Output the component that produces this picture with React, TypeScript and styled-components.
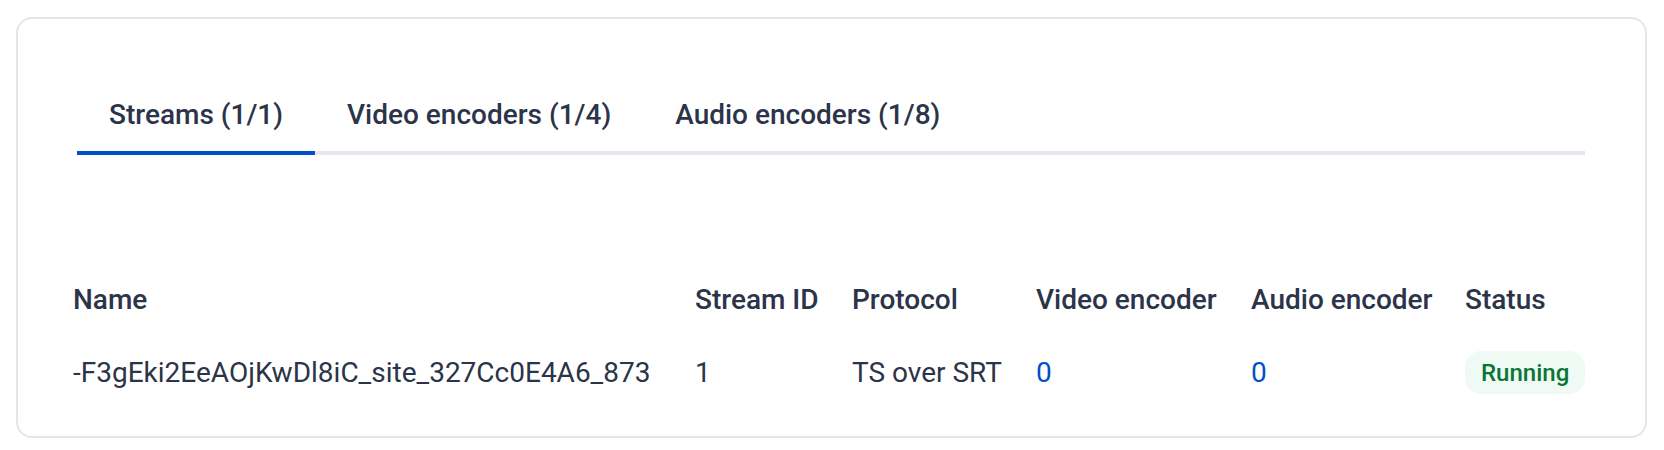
import { useState } from 'react';
import styled, { createGlobalStyle } from 'styled-components';

const GlobalStyle = createGlobalStyle`
  html, body {
    margin: 0;
    padding: 0;
    background: #ffffff;
    font-family: Roboto, "Liberation Sans", Arial, sans-serif;
    color: #2b3448;
  }
`;

interface StreamRow {
  name: string;
  streamId: number;
  protocol: string;
  videoEncoder: number;
  audioEncoder: number;
  status: string;
}

const tabs = ['Streams (1/1)', 'Video encoders (1/4)', 'Audio encoders (1/8)'];

const columns = [
  { label: 'Name', width: 622 },
  { label: 'Stream ID', width: 157 },
  { label: 'Protocol', width: 184 },
  { label: 'Video encoder', width: 215 },
  { label: 'Audio encoder', width: 214 },
  { label: 'Status', width: 124 },
];

const tableWidth = columns.reduce((sum, c) => sum + c.width, 0);

const rows: StreamRow[] = [
  {
    name: '-F3gEki2EeAOjKwDl8iC_site_327Cc0E4A6_873',
    streamId: 1,
    protocol: 'TS over SRT',
    videoEncoder: 0,
    audioEncoder: 0,
    status: 'Running',
  },
];

const Page = styled.div`
  padding: 17px 17px 15px 16px;
`;

const Card = styled.section`
  border: 2px solid #e4e6ed;
  border-radius: 16px;
  padding: 60px 60px 18px 59px;
  background: #ffffff;
`;

const TabList = styled.div`
  display: flex;
  border-bottom: 4px solid #e5e7ef;
`;

const Tab = styled.button<{ $active?: boolean }>`
  appearance: none;
  background: none;
  border: none;
  border-bottom: 4px solid ${p => (p.$active ? '#0050c8' : 'transparent')};
  margin-bottom: -4px;
  padding: 20px 32px;
  font-family: inherit;
  font-size: 28px;
  font-weight: 500;
  line-height: 32px;
  color: #2b3448;
  cursor: pointer;
`;

const Table = styled.table<{ $width: number }>`
  width: ${p => p.$width}px;
  margin: 117px 0 0 -4px;
  border-collapse: collapse;
  table-layout: fixed;
`;

const Col = styled.col<{ $width: number }>`
  width: ${p => p.$width}px;
`;

const HeadCell = styled.th`
  padding: 12px 0;
  text-align: left;
  font-size: 28px;
  font-weight: 500;
  line-height: 32px;
  color: #2b3448;
  white-space: nowrap;
`;

const Cell = styled.td`
  padding: 23px 0 24px;
  font-size: 28px;
  font-weight: 400;
  line-height: 32px;
  color: #2b3448;
  white-space: nowrap;
`;

const EncoderLink = styled.a`
  color: #0050c8;
  text-decoration: none;
`;

const StatusBadge = styled.span`
  display: inline-block;
  padding: 6px 16px 5px;
  border-radius: 16px;
  background: #eefaf3;
  color: #0a7536;
  font-size: 24px;
  font-weight: 500;
  line-height: 32px;
`;

export default function App() {
  const [activeTab, setActiveTab] = useState(0);

  return (
    <Page>
      <GlobalStyle />
      <Card>
        <TabList>
          {tabs.map((label, i) => (
            <Tab key={label} $active={i === activeTab} onClick={() => setActiveTab(i)}>
              {label}
            </Tab>
          ))}
        </TabList>

        <Table $width={tableWidth}>
          <colgroup>
            {columns.map(c => (
              <Col key={c.label} $width={c.width} />
            ))}
          </colgroup>
          <thead>
            <tr>
              {columns.map(c => (
                <HeadCell key={c.label}>{c.label}</HeadCell>
              ))}
            </tr>
          </thead>
          <tbody>
            {rows.map(row => (
              <tr key={row.name}>
                <Cell>{row.name}</Cell>
                <Cell>{row.streamId}</Cell>
                <Cell>{row.protocol}</Cell>
                <Cell>
                  <EncoderLink href="#">{row.videoEncoder}</EncoderLink>
                </Cell>
                <Cell>
                  <EncoderLink href="#">{row.audioEncoder}</EncoderLink>
                </Cell>
                <Cell>
                  <StatusBadge>{row.status}</StatusBadge>
                </Cell>
              </tr>
            ))}
          </tbody>
        </Table>
      </Card>
    </Page>
  );
}
